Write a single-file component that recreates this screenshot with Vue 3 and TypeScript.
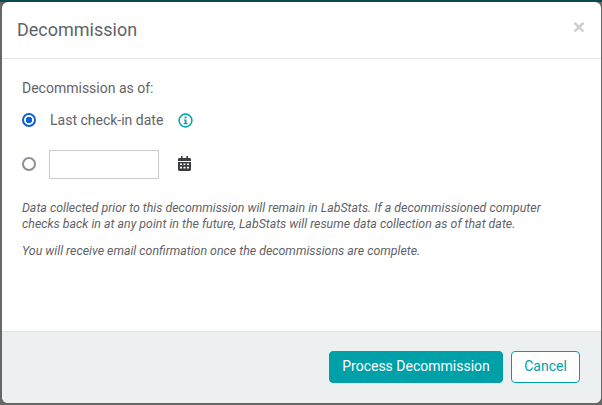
<script setup lang="ts">
import { ref } from 'vue'

const mode = ref<'last' | 'date'>('last')
const date = ref('')
</script>

<template>
  <div class="backdrop">
    <div class="modal">
      <header class="modal-header">
        <h2 class="title">Decommission</h2>
        <span class="close">×</span>
      </header>
      <main class="modal-body">
        <div class="as-of">Decommission as of:</div>
        <label class="row first">
          <span class="radio" :class="{ on: mode === 'last' }" @click="mode = 'last'"></span>
          <span class="row-label">Last check-in date</span>
          <svg class="info" width="15" height="15" viewBox="0 0 15 15">
            <circle cx="7.5" cy="7.5" r="6.4" fill="none" stroke="#00a0a8" stroke-width="1.5" />
            <rect x="6.6" y="3.5" width="1.9" height="1.9" fill="#00a0a8" />
            <path d="M5.8 6.4h2.7v3.7h1v1.2H5.7v-1.2h1V7.6h-.9z" fill="#00a0a8" />
          </svg>
        </label>
        <div class="row second">
          <span class="radio" :class="{ on: mode === 'date' }" @click="mode = 'date'"></span>
          <input v-model="date" class="date-input" type="text" />
          <svg class="calendar" width="13" height="15" viewBox="0 0 13 15">
            <path d="M3 0h1.6v2h3.8V0H10v2h1.6A1.4 1.4 0 0 1 13 3.4V5H0V3.4A1.4 1.4 0 0 1 1.4 2H3z" fill="#3a3d42" />
            <path fill-rule="evenodd" d="M0 6h13v7.6a1.4 1.4 0 0 1-1.4 1.4H1.4A1.4 1.4 0 0 1 0 13.6zM2 7.5v1.6h2V7.5zm3.5 0v1.6h2V7.5zm3.5 0v1.6h2V7.5zM2 10.8v1.6h2v-1.6zm3.5 0v1.6h2v-1.6zm3.5 0v1.6h2v-1.6z" fill="#3a3d42" />
          </svg>
        </div>
        <p class="note">
          Data collected prior to this decommission will remain in LabStats. If a decommissioned computer
          checks back in at any point in the future, LabStats will resume data collection as of that date.
        </p>
        <p class="note confirm">You will receive email confirmation once the decommissions are complete.</p>
      </main>
      <footer class="modal-footer">
        <button class="btn primary">Process Decommission</button>
        <button class="btn outline">Cancel</button>
      </footer>
    </div>
  </div>
</template>

<style>
html,
body {
  margin: 0;
  background: #666;
}
</style>

<style scoped>
.backdrop {
  width: 602px;
  height: 405px;
  box-sizing: border-box;
  padding: 2px 1px 2px 2px;
  background: linear-gradient(#0b4a4c 2px, #676767 2px);
  font-family: Roboto, sans-serif;
  overflow: hidden;
}
.modal {
  height: 100%;
  display: flex;
  flex-direction: column;
  background: #fff;
  border-radius: 6px;
  overflow: hidden;
}
.modal-header {
  height: 57px;
  flex: none;
  box-sizing: border-box;
  padding: 0 15px 2px;
  display: flex;
  align-items: center;
  justify-content: space-between;
  border-bottom: 1px solid #e5e5e5;
}
.title {
  margin: 0;
  font-size: 18px;
  font-weight: 400;
  color: #5f6368;
}
.close {
  font-family: "Liberation Sans", sans-serif;
  font-size: 21px;
  font-weight: 700;
  line-height: 1;
  color: #ccc;
  margin-top: -6px;
  margin-right: 1px;
}
.modal-body {
  flex: 1;
  padding: 20px 20px 0;
  color: #5f6368;
}
.as-of {
  font-size: 14px;
  line-height: 18px;
}
.row {
  display: flex;
  align-items: center;
}
.first {
  margin-top: 13px;
  height: 20px;
}
.second {
  margin-top: 19px;
  height: 30px;
}
.radio {
  flex: none;
  width: 14px;
  height: 14px;
  box-sizing: border-box;
  border: 2px solid #8e8e9c;
  border-radius: 50%;
  background: #fff;
}
.radio.on {
  border-color: #0b62d6;
  background: radial-gradient(circle, #0b62d6 0 3px, #fff 3.5px);
}
.row-label {
  margin-left: 14px;
  font-size: 14px;
}
.info {
  margin-left: 15px;
}
.date-input {
  margin-left: 13px;
  width: 110px;
  height: 29px;
  box-sizing: border-box;
  border: 1px solid #ccc;
  outline: none;
  padding: 0 6px;
  background: #fff;
}
.calendar {
  margin-left: 19px;
  margin-top: -1px;
}
.note {
  margin: 21px 0 0;
  width: 530px;
  font-size: 12.37px;
  line-height: 16px;
  font-style: italic;
}
.note.confirm {
  margin-top: 11px;
}
.modal-footer {
  height: 72px;
  flex: none;
  box-sizing: border-box;
  padding: 19px 21px 20px 0;
  display: flex;
  justify-content: flex-end;
  gap: 8px;
  background: #ecf0f1;
  border-top: 1px solid #e1e4e6;
}
.btn {
  height: 32px;
  box-sizing: border-box;
  border-radius: 4px;
  font-family: Roboto, sans-serif;
  font-size: 14px;
  padding: 0 0 2px;
  cursor: pointer;
}
.primary {
  width: 174px;
  border: 1px solid #00a0a8;
  background: #00a0a8;
  color: #fff;
}
.outline {
  width: 69px;
  border: 1px solid #00a0a8;
  background: #fff;
  color: #00a0a8;
}
</style>
